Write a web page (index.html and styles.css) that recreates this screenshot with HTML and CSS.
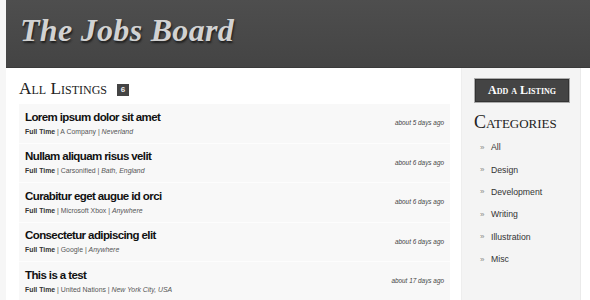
FILE: index.html
```html
<!DOCTYPE html>
<html>
<head>
<meta charset="utf-8">
<link rel="stylesheet" href="styles.css">
</head>
<body>
<div class="page">
  <header class="header">
    <h1 class="logo">The Jobs Board</h1>
  </header>
  <div class="body">
    <main class="main">
      <h2 class="section-title">All Listings <span class="badge">6</span></h2>
      <ul class="listings">
        <li class="listing">
          <div class="info">
            <div class="job-title">Lorem ipsum dolor sit amet</div>
            <div class="meta"><b>Full Time</b> | A Company | <i>Neverland</i></div>
          </div>
          <div class="date">about 5 days ago</div>
        </li>
        <li class="listing">
          <div class="info">
            <div class="job-title">Nullam aliquam risus velit</div>
            <div class="meta"><b>Full Time</b> | Carsonified | <i>Bath, England</i></div>
          </div>
          <div class="date">about 6 days ago</div>
        </li>
        <li class="listing">
          <div class="info">
            <div class="job-title">Curabitur eget augue id orci</div>
            <div class="meta"><b>Full Time</b> | Microsoft Xbox | <i>Anywhere</i></div>
          </div>
          <div class="date">about 6 days ago</div>
        </li>
        <li class="listing">
          <div class="info">
            <div class="job-title">Consectetur adipiscing elit</div>
            <div class="meta"><b>Full Time</b> | Google | <i>Anywhere</i></div>
          </div>
          <div class="date">about 6 days ago</div>
        </li>
        <li class="listing">
          <div class="info">
            <div class="job-title">This is a test</div>
            <div class="meta"><b>Full Time</b> | United Nations | <i>New York City, USA</i></div>
          </div>
          <div class="date">about 17 days ago</div>
        </li>
      </ul>
    </main>
    <aside class="sidebar">
      <a class="add-btn">Add a Listing</a>
      <h2 class="cat-title">Categories</h2>
      <ul class="cats">
        <li><span class="raquo">&raquo;</span>All</li>
        <li><span class="raquo">&raquo;</span>Design</li>
        <li><span class="raquo">&raquo;</span>Development</li>
        <li><span class="raquo">&raquo;</span>Writing</li>
        <li><span class="raquo">&raquo;</span>Illustration</li>
        <li><span class="raquo">&raquo;</span>Misc</li>
      </ul>
    </aside>
  </div>
</div>
</body>
</html>
```
FILE: styles.css
```css
html, body {
  margin: 0;
  padding: 0;
  background: #f6f6f6;
  overflow: hidden;
}
.page {
  margin-left: 6px;
  width: 584px;
  height: 300px;
  background: #fff;
  font-family: "Liberation Sans", Arial, sans-serif;
}
.header {
  height: 68px;
  background: linear-gradient(#4e4e4e, #444);
  border-bottom: 1px solid #3a3a3a;
  box-sizing: border-box;
  padding: 12px 0 0 14px;
}
.logo {
  margin: 0;
  font-family: "Liberation Serif", "Times New Roman", serif;
  font-style: italic;
  font-weight: bold;
  font-size: 32px;
  line-height: 36px;
  color: #d2d2d2;
  text-shadow: 1px 2px 2px #1e1e1e;
  letter-spacing: 0.3px;
}
.body {
  display: flex;
}
.main {
  width: 455px;
  padding: 9px 11px 0 13px;
  box-sizing: border-box;
}
.section-title {
  margin: 0 0 3px 0;
  font-family: "Liberation Serif", "Times New Roman", serif;
  font-variant: small-caps;
  font-weight: normal;
  font-size: 17.3px;
  line-height: 24px;
  color: #222;
  display: flex;
  align-items: center;
  gap: 10px;
}
.badge {
  display: inline-block;
  width: 12px;
  height: 12px;
  background: #444;
  color: #eee;
  font-family: "Liberation Sans", Arial, sans-serif;
  font-variant: normal;
  font-size: 8px;
  line-height: 12px;
  text-align: center;
  margin-top: 2px;
  font-weight: bold;
}
.listings {
  list-style: none;
  margin: 0;
  padding: 0;
}
.listing {
  display: flex;
  justify-content: space-between;
  align-items: center;
  background: #f8f8f8;
  border-bottom: 1px solid #fdfdfd;
  height: 39.5px;
  box-sizing: border-box;
  padding: 0 6px 0 6px;
}
.job-title {
  font-weight: bold;
  font-size: 11.5px;
  letter-spacing: -0.6px;
  line-height: 15px;
  color: #111;
}
.meta {
  font-size: 6.9px;
  line-height: 11px;
  color: #555;
  margin-top: 1px;
}
.meta b {
  color: #333;
}
.date {
  font-size: 6.4px;
  font-style: italic;
  color: #444;
  margin-top: -1px;
}
.sidebar {
  width: 120px;
  height: 232px;
  background: #f4f4f4;
  border-left: 1px solid #eee;
  border-right: 1px solid #eaeaea;
  box-sizing: border-box;
  padding: 10px 0 0 12px;
}
.add-btn {
  display: block;
  width: 96px;
  height: 25px;
  box-sizing: border-box;
  background: #444;
  border: 1px solid #aaa;
  box-shadow: inset 0 0 0 1px #333;
  color: #fff;
  font-family: "Liberation Serif", "Times New Roman", serif;
  font-variant: small-caps;
  font-weight: bold;
  font-size: 12px;
  line-height: 23px;
  text-align: center;
}
.cat-title {
  margin: 8px 0 3px 0;
  font-family: "Liberation Serif", "Times New Roman", serif;
  font-variant: small-caps;
  font-weight: normal;
  font-size: 18px;
  line-height: 22px;
  color: #222;
}
.cats {
  list-style: none;
  margin: 0;
  padding: 0 0 0 6px;
}
.cats li {
  display: flex;
  align-items: center;
  height: 22.4px;
  font-size: 8.7px;
  color: #333;
}
.raquo {
  width: 11px;
  color: #888;
  font-size: 8px;
}
```
